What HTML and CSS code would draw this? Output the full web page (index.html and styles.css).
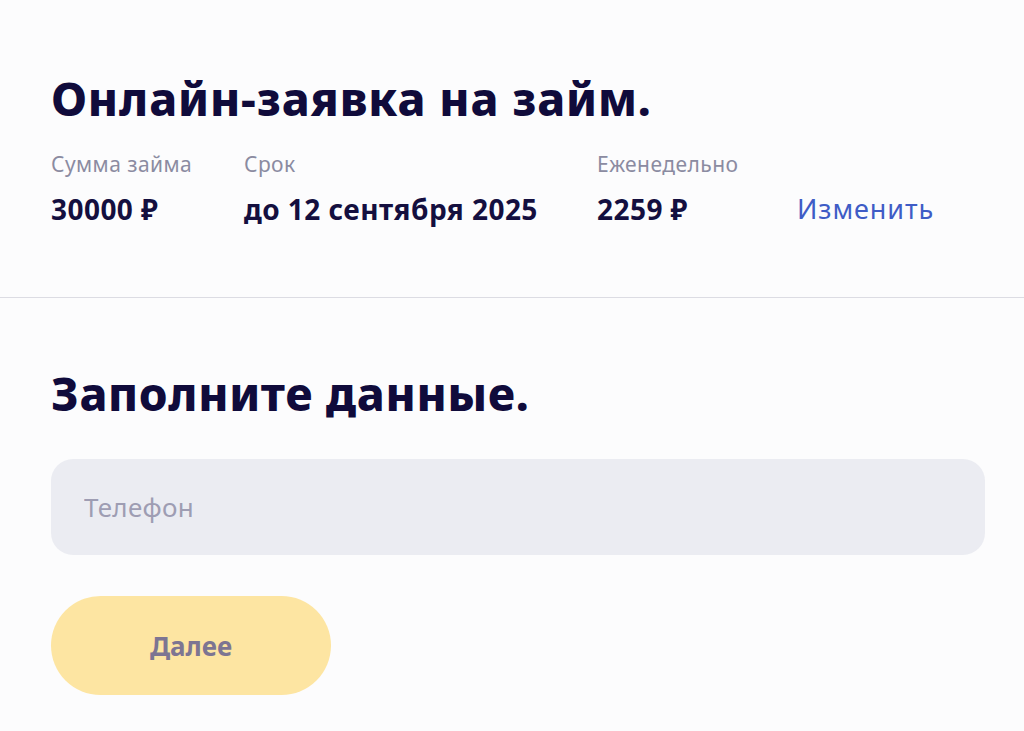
FILE: index.html
```html
<!DOCTYPE html>
<html lang="ru">
<head>
<meta charset="utf-8">
<title>Онлайн-заявка на займ</title>
<link rel="stylesheet" href="styles.css">
</head>
<body>
<section class="summary">
  <h1 class="title">Онлайн-заявка на займ.</h1>
  <div class="terms">
    <div class="term">
      <div class="term-label">Сумма займа</div>
      <div class="term-value">30000 ₽</div>
    </div>
    <div class="term">
      <div class="term-label">Срок</div>
      <div class="term-value">до 12 сентября 2025</div>
    </div>
    <div class="term">
      <div class="term-label">Еженедельно</div>
      <div class="term-value">2259 ₽</div>
    </div>
    <div class="term term-action">
      <a class="change-link" href="#">Изменить</a>
    </div>
  </div>
</section>
<section class="form">
  <h2 class="title">Заполните данные.</h2>
  <div class="field">
    <input class="field-input" type="text" placeholder="Телефон">
  </div>
  <button class="next-btn" type="button">Далее</button>
</section>
</body>
</html>
```

FILE: styles.css
```css
* { box-sizing: border-box; }
html, body { margin: 0; padding: 0; }
body {
  background: #fcfcfd;
  font-family: "Noto Sans", "Open Sans", sans-serif;
  color: #120d3e;
  width: 1024px;
  height: 731px;
  overflow: hidden;
}
.summary {
  padding: 70px 51px 0;
  height: 298px;
  border-bottom: 1px solid #dcdce3;
}
.title {
  margin: 0;
  font-size: 46px;
  line-height: 56px;
  font-weight: 800;
  color: #100b3b;
  letter-spacing: 0.9px;
}
.form .title {
  letter-spacing: 0.7px;
}
.terms {
  display: grid;
  grid-template-columns: 193px 353px 200px auto;
  margin-top: 24px;
}
.term-label {
  font-size: 21px;
  line-height: 28px;
  color: #8b8ba1;
  letter-spacing: 0.45px;
}
.term-value {
  margin-top: 13px;
  font-size: 28px;
  line-height: 36px;
  font-weight: 700;
  color: #140f3f;
  letter-spacing: 0.45px;
}
.term-action {
  display: flex;
  align-items: flex-end;
}
.change-link {
  font-size: 27px;
  line-height: 36px;
  color: #3f5cc6;
  text-decoration: none;
  letter-spacing: 0.9px;
}
.form {
  padding: 67px 51px 0;
}
.field {
  margin-top: 38px;
}
.field-input {
  display: block;
  width: 934px;
  height: 96px;
  border: none;
  border-radius: 22px;
  background: #ebecf2;
  padding: 0 33px;
  font-family: inherit;
  font-size: 26px;
  letter-spacing: 0.3px;
  color: #120d3e;
  outline: none;
}
.field-input::placeholder {
  color: #9e9db3;
}
.next-btn {
  display: block;
  margin-top: 41px;
  width: 280px;
  height: 99px;
  border: none;
  border-radius: 50px;
  background: #fde5a2;
  font-family: inherit;
  font-size: 26px;
  font-weight: 700;
  color: #7d7592;
}
```
